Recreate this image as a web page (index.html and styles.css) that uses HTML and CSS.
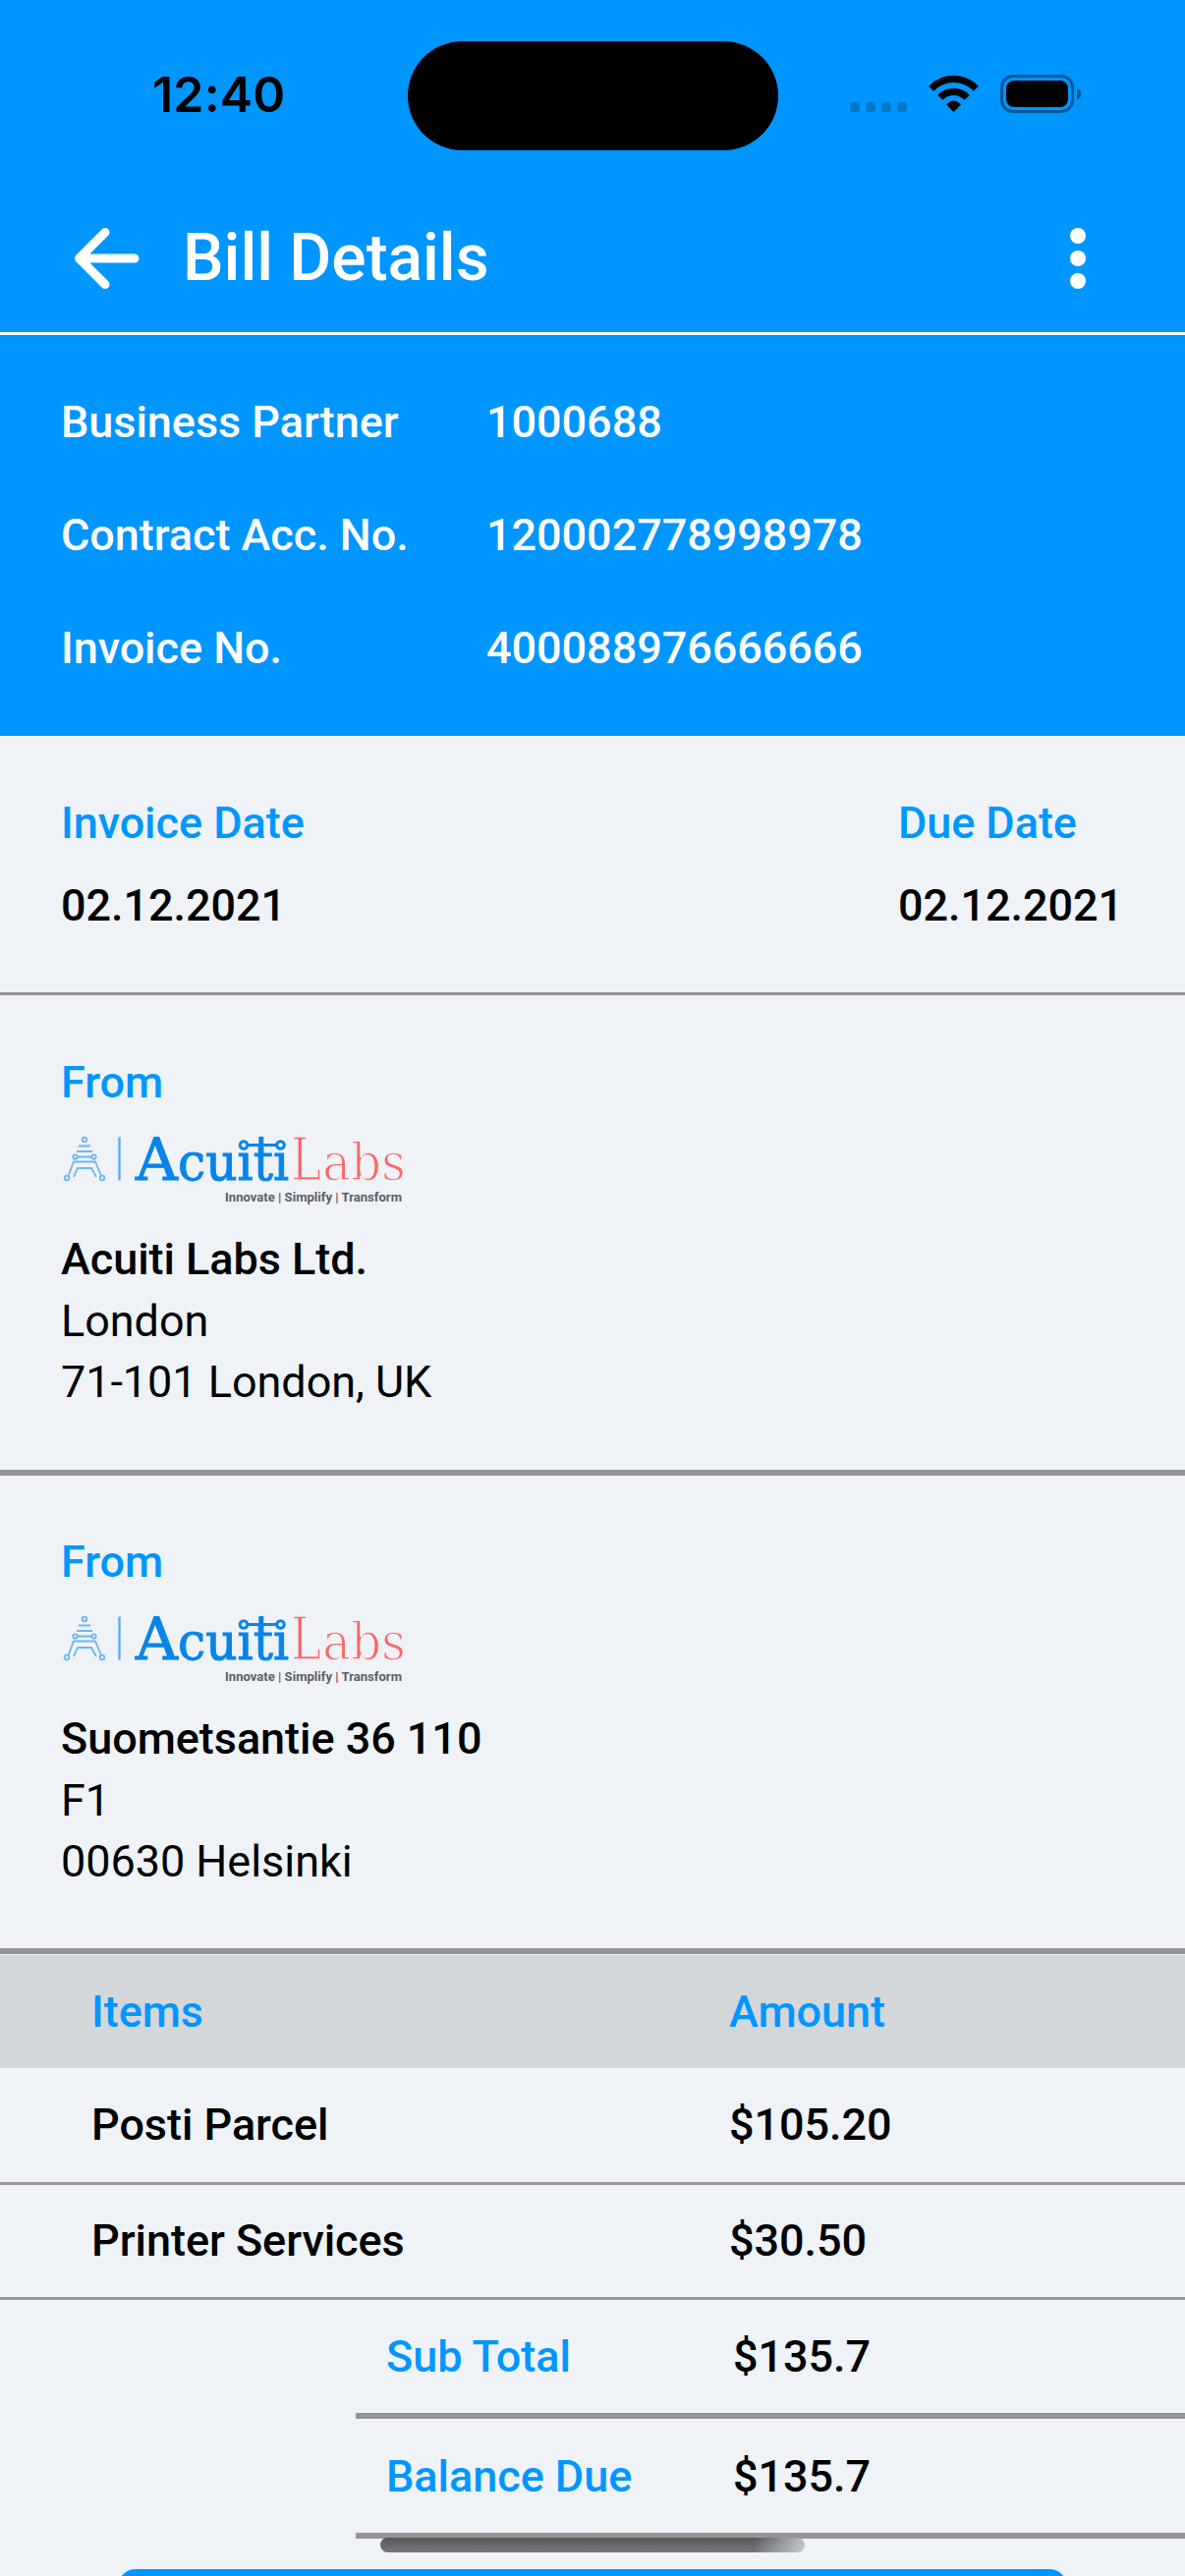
FILE: index.html
```html
<!DOCTYPE html>
<html lang="en">
<head>
<meta charset="utf-8">
<title>Bill Details</title>
<link rel="stylesheet" href="styles.css">
</head>
<body>
<svg class="defs" width="0" height="0">
  <symbol id="brand" viewBox="0 0 354 80">
    <g fill="none" stroke="#6db5f2" stroke-width="1.8">
      <circle cx="24" cy="7" r="2.3"/>
      <path d="M18 13.500H30M16 19H32M17 24.500H31"/>
      <circle cx="14.5" cy="24.500" r="2.2"/><circle cx="33.500" cy="24.500" r="2.200"/>
      <path d="M7.500 44L13 29.500H35L41 44M13 45L17 36H31L36 45"/>
      <circle cx="6" cy="46" r="2.300"/><circle cx="42" cy="46" r="2.300"/>
    </g>
    <path d="M59.500 4.500V48.500" stroke="#5aabef" stroke-width="2.400"/>
    <text class="word-a cap" x="76" y="47.500" textLength="43" lengthAdjust="spacingAndGlyphs">A</text>
    <text class="word-a" x="119" y="47.500" textLength="113" lengthAdjust="spacingAndGlyphs">cuıtı</text>
    <text class="word-b cap" x="234" y="47.500" textLength="31" lengthAdjust="spacingAndGlyphs">L</text>
    <text class="word-b" x="266" y="47.500" textLength="85" lengthAdjust="spacingAndGlyphs">abs</text>
    <g fill="none" stroke="#0785ea" stroke-width="3">
      <path d="M190 12.500H220"/><path d="M203.800 4V24" stroke-width="5"/><circle cx="186" cy="12.500" r="3.800"/><circle cx="223.500" cy="12.500" r="3.800"/>
    </g>
    <text class="tagline" x="167" y="69.500" textLength="180" lengthAdjust="spacingAndGlyphs">Innovate | Simplify | Transform</text>
  </symbol>
</svg>
<div class="screen">
  <header class="top">
    <div class="status">
      <span class="clock">12:40</span>
      <span class="island"></span>
      <svg class="indicators" width="240" height="50" viewBox="0 0 240 50">
        <g opacity=".2"><rect x="2" y="29" width="10" height="10" rx="3.500"/><rect x="18" y="29" width="10" height="10" rx="3.500"/><rect x="34" y="29" width="10" height="10" rx="3.500"/><rect x="50" y="29" width="10" height="10" rx="3.500"/></g>
        <g fill="none" stroke="#000" stroke-width="7.200">
          <path d="M84.700 15.200A31.500 31.500 0 0 1 130.300 15.200"/>
          <path d="M93.800 24.200A19 19 0 0 1 121.200 24.200"/>
        </g>
        <path d="M107.500 39L100 31.400Q107.500 23.800 115 31.400Z"/>
        <g opacity=".4"><rect x="156.500" y="2.500" width="72" height="36" rx="11.500" fill="none" stroke="#000" stroke-width="3"/><path d="M233 14.500Q237 16 237 20.500T233 26.500Z"/></g>
        <rect x="161" y="7" width="63" height="27" rx="8"/>
      </svg>
    </div>
    <div class="appbar">
      <svg class="back" width="66" height="62" viewBox="0 0 66 62" fill="none" stroke="#fff" stroke-width="9" stroke-linecap="round" stroke-linejoin="round"><path d="M31 4.500L4.500 31L31 57.500M4.500 31H61"/></svg>
      <h1 class="title">Bill Details</h1>
      <svg class="more" width="16" height="62" viewBox="0 0 16 62" fill="#fff"><circle cx="8" cy="8" r="8"/><circle cx="8" cy="31" r="8"/><circle cx="8" cy="54" r="8"/></svg>
    </div>
    <dl class="account">
      <dt>Business Partner</dt><dd>1000688</dd>
      <dt>Contract Acc. No.</dt><dd>120002778998978</dd>
      <dt>Invoice No.</dt><dd>400088976666666</dd>
    </dl>
  </header>
  <section class="dates">
    <div><div class="label">Invoice Date</div><div class="date">02.12.2021</div></div>
    <div><div class="label">Due Date</div><div class="date">02.12.2021</div></div>
  </section>
  <section class="party">
    <div class="label">From</div>
    <svg class="logo" width="354" height="80"><use href="#brand"/></svg>
    <div class="name">Acuiti Labs Ltd.</div>
    <div class="line">London</div>
    <div class="line">71-101 London, UK</div>
  </section>
  <section class="party second">
    <div class="label">From</div>
    <svg class="logo" width="354" height="80"><use href="#brand"/></svg>
    <div class="name">Suometsantie 36 110</div>
    <div class="line">F1</div>
    <div class="line">00630 Helsinki</div>
  </section>
  <section class="items">
    <div class="row head"><span>Items</span><span>Amount</span></div>
    <div class="row"><span>Posti Parcel</span><span>$105.20</span></div>
    <div class="row last"><span>Printer Services</span><span>$30.50</span></div>
  </section>
  <section class="totals">
    <div class="total"><span class="label">Sub Total</span><span>$135.7</span></div>
    <div class="total due"><span class="label">Balance Due</span><span>$135.7</span></div>
    <span class="scrollbar"></span>
  </section>
  <div class="pay"></div>
</div>
</body>
</html>
```
FILE: styles.css
```css
* { box-sizing: border-box; }
body { margin: 0; }
.defs { display: block; position: absolute; }
.screen {
  width: 1206px; height: 2622px; overflow: hidden;
  background: #eff3f8; color: #000;
  font: 500 45px/60px Roboto, sans-serif;
  letter-spacing: -.05px;
}
.label { color: #0096ff; }
.top { height: 749px; background: #0096ff; color: #fff; }
.status { height: 194px; display: flex; align-items: flex-start; padding-left: 155px; color: #000; }
.clock { width: 260px; margin-top: 66px; font: 600 50px/60px Inter, sans-serif; letter-spacing: .2px; }
.island { width: 376.5px; height: 111px; margin-top: 42px; border-radius: 56px; background: #000; }
.indicators { margin: 75px 0 0 71.5px; }
.appbar { height: 147px; display: flex; align-items: center; padding: 0 101px 6px 76px; border-bottom: 3px solid #fff; }
.title { margin: 0 auto 0 44px; font: 500 66px/80px Roboto, sans-serif; }
.account { margin: 0; padding: 59px 62px 0; display: grid; grid-template-columns: 433px 1fr; grid-auto-rows: 115px; }
.account dd { margin: 0; }
.dates { display: flex; justify-content: space-between; height: 264px; padding: 59px 63px 0 62px; border-bottom: 3px solid #959595; }
.date { margin-top: 24px; }
.party { height: 489px; padding: 59px 62px 0; border-bottom: 6px solid #959595; }
.party.second { height: 487px; padding-top: 58px; }
.logo { display: block; margin: 21px 0 19px; letter-spacing: 0; }
.word-a { font: 400 52px "DejaVu Serif", serif; fill: #0785ea; stroke: #0785ea; stroke-width: 1px; }
.word-b { font: 400 52px "DejaVu Serif", serif; fill: #ff6464; stroke: #eff3f8; stroke-width: 1.6px; }
.word-a.cap, .word-b.cap { font-size: 60px; }
.tagline { font: 700 12.500px Roboto, sans-serif; fill: #5c5f63; }
.name, .line { height: 62.500px; }
.line { font-weight: 400; }
.items { padding-top: 1px; }
.row { display: grid; grid-template-columns: 649px 1fr; height: 119px; padding: 28px 0 0 93px; border-bottom: 3px solid #959595; }
.row.head { height: 115px; background: #d4d7da; color: #0096ff; border: 0; }
.row.last { height: 117px; padding-top: 27px; }
.totals { position: relative; margin-left: 362px; }
.total { display: grid; grid-template-columns: 353px 1fr; height: 121px; padding: 28px 0 0 31px; border-bottom: 6px solid #959595; }
.total.due { height: 122px; padding-top: 29px; }
.scrollbar {
  position: absolute; left: 25px; bottom: -14px; width: 432px; height: 15px; border-radius: 8px;
  background: linear-gradient(90deg, #0000 88%, #eff3f8aa), linear-gradient(#555658, #77797c);
}
.pay { width: 966px; height: 150px; margin: 31px auto 0; border-radius: 18px; background: #0096ff; }
```
